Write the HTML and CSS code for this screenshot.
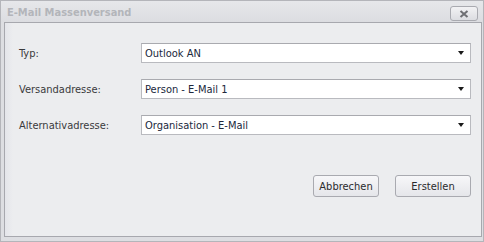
FILE: index.html
```html
<!DOCTYPE html>
<html lang="de">
<head>
<meta charset="utf-8">
<title>E-Mail Massenversand</title>
<link rel="stylesheet" href="styles.css">
</head>
<body>
<div class="window">
  <div class="titlebar">
    <span class="title">E-Mail Massenversand</span>
    <button class="close" type="button" aria-label="Schließen">
      <svg width="10" height="8" viewBox="0 0 10 8"><path d="M1.5 1 L8.5 7 M8.5 1 L1.5 7" stroke="#6e6f73" stroke-width="2" fill="none"/></svg>
    </button>
  </div>
  <div class="panel">
    <div class="form">
      <label class="label">Typ:</label>
      <div class="combo"><span class="value">Outlook AN</span><span class="arrow"></span></div>
      <label class="label">Versandadresse:</label>
      <div class="combo"><span class="value">Person - E-Mail 1</span><span class="arrow"></span></div>
      <label class="label">Alternativadresse:</label>
      <div class="combo"><span class="value">Organisation - E-Mail</span><span class="arrow"></span></div>
    </div>
    <div class="buttons">
      <button class="btn btn-cancel" type="button">Abbrechen</button>
      <button class="btn btn-create" type="button">Erstellen</button>
    </div>
  </div>
</div>
</body>
</html>
```
FILE: styles.css
```css
html, body {
  margin: 0;
  padding: 0;
}
body {
  width: 484px;
  height: 242px;
  overflow: hidden;
  font-family: "DejaVu Sans Condensed", "DejaVu Sans", sans-serif;
  font-stretch: condensed;
}
.window {
  box-sizing: border-box;
  width: 484px;
  height: 242px;
  background: #dddee2;
  border: 1px solid #b4b5ba;
  display: flex;
  flex-direction: column;
}
.titlebar {
  height: 21px;
  display: flex;
  align-items: center;
  justify-content: space-between;
  padding: 0 5px 0 6px;
  background: linear-gradient(#e6e7ea, #dcdde1);
}
.title {
  font-weight: bold;
  font-size: 11px;
  color: #b3b5ba;
  padding-top: 1px;
}
.close {
  box-sizing: border-box;
  width: 28px;
  height: 15px;
  margin-top: 4px;
  padding: 0;
  border: 1px solid #a9aab0;
  border-radius: 3px;
  background: linear-gradient(#f2f2f4, #dcdde1);
  display: flex;
  align-items: center;
  justify-content: center;
}
.panel {
  flex: 1;
  margin: 0 1px 4px 3px;
  border: 1px solid #a7a8ae;
  background: linear-gradient(90deg, #e4e5ea 0, #ecedef 8px, #ecedef 100%);
  display: flex;
  flex-direction: column;
  padding: 20px 10px 0 14px;
}
.form {
  display: grid;
  grid-template-columns: 122px 330px;
  row-gap: 16px;
  align-items: center;
}
.label {
  font-size: 11px;
  color: #3a3a3c;
}
.combo {
  box-sizing: border-box;
  height: 20px;
  border: 1px solid #b9babf;
  border-top-color: #a9aaaf;
  background: #ffffff;
  display: flex;
  align-items: center;
  justify-content: space-between;
  padding: 0 6px 0 3px;
}
.value {
  font-size: 11px;
  color: #20283c;
}
.arrow {
  width: 0;
  height: 0;
  border-left: 3.5px solid transparent;
  border-right: 3.5px solid transparent;
  border-top: 4px solid #1a1a1a;
}
.buttons {
  display: flex;
  justify-content: flex-end;
  gap: 16px;
  margin-top: 40px;
}
.btn {
  box-sizing: border-box;
  height: 22px;
  border: 1px solid #a9aab0;
  border-radius: 3px;
  background: linear-gradient(#f7f7f9, #e5e6ea);
  font-family: "DejaVu Sans Condensed", "DejaVu Sans", sans-serif;
  font-stretch: condensed;
  font-size: 11px;
  color: #2a2a2c;
  padding: 0;
}
.btn-cancel { width: 66px; }
.btn-create { width: 76px; }
```
